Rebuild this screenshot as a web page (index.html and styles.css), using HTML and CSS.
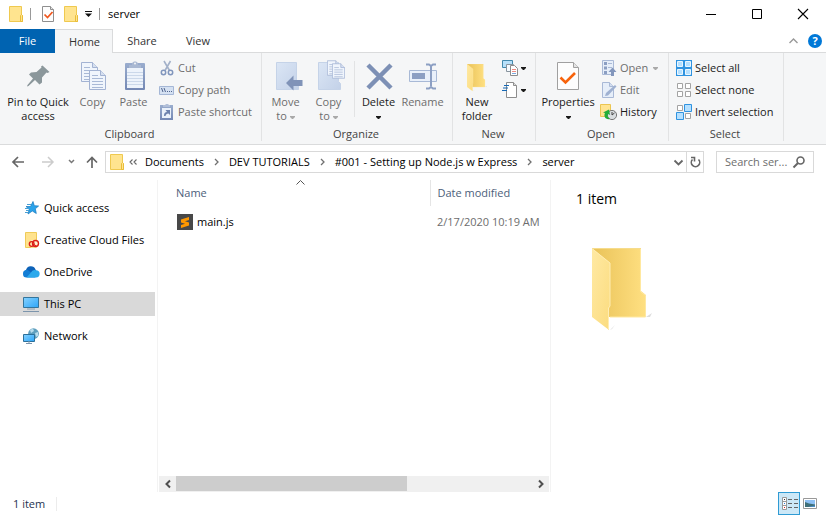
FILE: index.html
```html
<!DOCTYPE html>
<html lang="en">
<head>
<meta charset="utf-8">
<title>server</title>
<link rel="stylesheet" href="styles.css">
</head>
<body>
<svg class="defs" width="0" height="0" aria-hidden="true">
  <defs>
    <linearGradient id="blue" x1="0" y1="0" x2="1" y2="1"><stop offset="0" stop-color="#dbe6f5"/><stop offset="1" stop-color="#c3d1e8"/></linearGradient>
    <linearGradient id="clip" x1="0" y1="0" x2="0" y2="1"><stop offset="0" stop-color="#9aadce"/><stop offset="1" stop-color="#7488b4"/></linearGradient>
    <linearGradient id="back" x1="0" y1="0" x2="1" y2="0"><stop offset="0" stop-color="#e9c258"/><stop offset="1" stop-color="#ffe082"/></linearGradient>
    <linearGradient id="front" x1="0" y1="0" x2="1" y2="1"><stop offset="0" stop-color="#ffe9a3"/><stop offset="1" stop-color="#fbdc7f"/></linearGradient>
    <linearGradient id="screen" x1="0" y1="0" x2="1" y2="1"><stop offset="0" stop-color="#86d2ff"/><stop offset="1" stop-color="#2da5f8"/></linearGradient>
    <symbol id="folder" viewBox="0 0 14 16">
      <path d="M.5.5h12v8l1 1v6H.5z" fill="#ffe48f" stroke="#efc94f"/>
      <path d="M11.5 15V9.500l1-1 1 1v6h-2z" fill="#ffe48f" stroke="#e9bd38"/>
    </symbol>
    <symbol id="checkdoc" viewBox="0 0 22 28">
      <path d="M.5.500h16l5 5v22H.5z" fill="#fdfdfd" stroke="#a0a0a0"/>
      <path d="M16.500.500v5h5" fill="#e4e4e4" stroke="#a0a0a0"/>
      <path d="M3.500 15.500l5 5L18 11" fill="none" stroke="#f7630c" stroke-width="2.600"/>
    </symbol>
    <symbol id="checkdoc-small" viewBox="0 0 12 16">
      <path d="M.5.500h8l3 3v12H.5z" fill="#fdfdfd" stroke="#8f8f8f"/>
      <path d="M8.500.500v3h3" fill="#e4e4e4" stroke="#8f8f8f"/>
      <path d="M2.500 8.500l3 3 5-5.500" fill="none" stroke="#f0561d" stroke-width="1.700"/>
    </symbol>
    <symbol id="page" viewBox="0 0 17 20">
      <path d="M.5.500h11l5 5v14H.5z" fill="#f0f5fc" stroke="#a3b3d3"/>
      <path d="M11.500.500v5h5" fill="#d6e0f0" stroke="#a3b3d3"/>
      <path d="M3 5.500h6M3 8.500h11M3 11.500h11M3 14.500h11M3 17.500h11" stroke="#a9b9d6" fill="none"/>
    </symbol>
    <symbol id="bigfolder" viewBox="0 0 60 84">
      <path d="M54 69l6-4-2 4zM18 82l5-5-3 4z" fill="#ddd"/>
      <path d="M0 0h49v43l5 4v22H0z" fill="url(#back)"/>
      <path d="M48.500 1v42.500l5 4V69H18" fill="none" stroke="#ffe8a0"/>
      <path d="M0 0l18 15v43l-1 2v22L0 69z" fill="url(#front)"/>
      <path d="M0 .500h49" stroke="#f6dc8c"/>
      <path d="M.5 1l17.500 14v43l-1.500 2v21" fill="none" stroke="#ffedb3"/>
    </symbol>
    <symbol id="down" viewBox="0 0 5 3"><path d="M0 0h5v1L3 3H2L0 1z" fill="currentColor"/></symbol>
    <symbol id="chev" viewBox="0 0 5 8"><path d="M1 1l3 3-3 3" fill="none" stroke="#707070" stroke-width="1.300"/></symbol>
  </defs>
</svg>

<header class="titlebar">
  <div class="quick">
    <svg class="ico14"><use href="#folder"/></svg>
    <span class="bar"></span>
    <button class="plain props" aria-label="Properties"><svg width="12" height="16"><use href="#checkdoc-small"/></svg></button>
    <button class="plain make" aria-label="New folder"><svg class="ico14"><use href="#folder"/></svg></button>
    <button class="plain" aria-label="Customize toolbar"><svg width="7" height="6" viewBox="0 0 7 6"><path d="M0 .500h7" stroke="#111"/><path d="M0 2.500h7L3.500 6z" fill="#111"/></svg></button>
    <span class="bar"></span>
  </div>
  <h1 class="title">server</h1>
  <div class="window-buttons">
    <button class="plain" aria-label="Minimize"><svg width="10" height="10"><path d="M0 5.500h10" stroke="#000"/></svg></button>
    <button class="plain" aria-label="Maximize"><svg width="10" height="10"><path d="M.5.500h9v9h-9z" stroke="#000" fill="none"/></svg></button>
    <button class="plain" aria-label="Close"><svg width="10" height="10"><path d="M0 0l10 10M10 0L0 10" stroke="#000" stroke-width="1.100"/></svg></button>
  </div>
</header>

<nav class="tabs" aria-label="Ribbon tabs">
  <button class="tab file">File</button>
  <button class="tab active">Home</button>
  <button class="tab share">Share</button>
  <button class="tab view">View</button>
  <div class="tab-tools">
    <button class="plain" aria-label="Collapse ribbon"><svg width="9" height="6"><path d="M.5 5l4-4 4 4" fill="none" stroke="#999" stroke-width="1.400"/></svg></button>
    <button class="help" aria-label="Help">?</button>
  </div>
</nav>

<section class="ribbon">
  <div class="group clipboard">
    <div class="tools">
      <button class="big pin"><svg class="ico32" viewBox="0 0 32 32"><path d="M20.500 5.500l7 6.500-2 1-1-.500-4.500 5 0 5-2.500 2-4.500-4.500-6.500 6-1.500.500.500-1.500 5.500-6.500-4-4 2-2 5.500-.500 5-4.500-.500-1z" fill="#8b979b"/></svg><span>Pin to Quick access</span></button>
      <button class="big copy" disabled><svg class="ico32" viewBox="0 0 32 32"><use href="#page" x="4" y="2" width="17" height="20"/><use href="#page" x="12" y="10" width="17" height="20"/></svg><span>Copy</span></button>
      <button class="big paste" disabled><svg class="ico32" viewBox="0 0 32 32"><rect x="7" y="3" width="20" height="27" rx="1" fill="url(#clip)"/><path d="M9 8h16v20H9z" fill="#edf3fb"/><path d="M9 12.500h16M9 15.500h16M9 18.500h16M9 21.500h16M9 24.500h16" stroke="#cbd8ea"/><path d="M11 8V5h3V3l2-1.500h2L20 3v2h3v3z" fill="#a9b8d2"/><circle cx="17" cy="3.500" r="1" fill="#f5f6f7"/></svg><span>Paste</span></button>
      <div class="stack">
        <button class="small" disabled><svg class="ico16" viewBox="0 0 16 16"><path d="M5 1l5.500 9.500M11.500 1L6 10.500" stroke="#a3b1c9" stroke-width="1.600" fill="none"/><circle cx="4.500" cy="12.500" r="2.200" fill="none" stroke="#8196bd" stroke-width="1.500"/><circle cx="11.500" cy="12.500" r="2.200" fill="none" stroke="#8196bd" stroke-width="1.500"/></svg>Cut</button>
        <button class="small" disabled><svg class="ico16" viewBox="0 0 16 16"><path d="M.5 4.500h14v8H.5z" fill="#d5e1f2" stroke="#a5b7d6"/><path d="M2.500 6l1.500 4M5 6l1.500 4" stroke="#51658e" fill="none"/><path d="M8 9h1v1H8zM10 9h1v1h-1zM12 9h1v1h-1z" fill="#51658e"/></svg>Copy path</button>
        <button class="small" disabled><svg class="ico16" viewBox="0 0 16 16"><rect x="1" y="1" width="13" height="15" fill="url(#clip)"/><path d="M3 4h9v10H3z" fill="#eaf1fa"/><path d="M4 3V1h2l1-1h2l1 1h1v2z" fill="#b1bfd8"/><path d="M5 12c0-3 1-4 3-4L6.500 6H11v5L9.500 9.500C7.500 9.500 7 10.500 6.500 12z" fill="#6d82ad"/></svg>Paste shortcut</button>
      </div>
    </div>
    <div class="caption">Clipboard</div>
  </div>
  <div class="group organize">
    <div class="tools">
      <button class="big move" disabled><svg class="ico32" viewBox="0 0 32 32"><path d="M6.500 2.500h20v19l2 2v6h-22z" fill="url(#blue)" stroke="#c5d3e8"/><path d="M16 23l7.500-7.500V20h9v6h-9v4.500z" fill="#8093b8"/></svg><span>Move<br>to <svg class="drop"><use href="#down"/></svg></span></button>
      <button class="big copyto" disabled><svg class="ico32" viewBox="0 0 32 32"><path d="M5.500 2.500h20v19l2 2v6h-22z" fill="url(#blue)" stroke="#c5d3e8"/><use href="#page" x="14" y="0" width="13" height="16"/><use href="#page" x="19" y="3" width="13" height="16"/></svg><span>Copy<br>to <svg class="drop"><use href="#down"/></svg></span></button>
      <span class="divider"></span>
      <button class="big delete"><svg class="ico32" viewBox="0 0 32 32"><path d="M5 5l23 23M28 5L5 28" stroke="#7d90b5" stroke-width="4.500"/></svg><span>Delete<br><svg class="drop"><use href="#down"/></svg></span></button>
      <button class="big rename" disabled><svg class="ico32" viewBox="0 0 32 32"><path d="M2.500 10.500h27v11h-27z" fill="#e9f0fa" stroke="#a8b9d6"/><path d="M5 13h13v6H5z" fill="#8c9fc3"/><path d="M19 4.500h3l2 1.500 2-1.500h3M24 6v20M19 28.500h3l2-1.500 2 1.500h3" stroke="#8c9fc3" stroke-width="2" fill="none"/></svg><span>Rename</span></button>
    </div>
    <div class="caption">Organize</div>
  </div>
  <div class="group new">
    <div class="tools">
      <button class="big folder"><svg class="ico32" viewBox="0 0 32 32"><use href="#bigfolder" x="5" y="4" width="22" height="28"/></svg><span>New folder</span></button>
      <div class="stack">
        <button class="small" aria-label="New item"><svg class="ico16" viewBox="0 0 16 16"><path d="M.5.500h10v7H.5z" fill="#b7e0fa" stroke="#4389ad"/><path d="M4.500 4.500h7v7h-7z" fill="#f5faff" stroke="#88949e"/><path d="M8.500 5.500h4l3 3v7h-7z" fill="#fff" stroke="#8d8d8d"/><path d="M10 9.500h4M10 11.500h4" stroke="#ef8b83"/><path d="M10 13.500h4" stroke="#7ba9df"/></svg><svg class="drop"><use href="#down"/></svg></button>
        <button class="small" aria-label="Easy access"><svg class="ico16" viewBox="0 0 16 16"><path d="M4.500.500h7l3 3v12h-10z" fill="#fff" stroke="#8d8d8d"/><path d="M11.500.500v3h3" fill="#ddd" stroke="#8d8d8d"/><path d="M2 3.500h5M1 6h5M0 8.500h5" stroke="#1769b5" stroke-width="1.200"/></svg><svg class="drop"><use href="#down"/></svg></button>
      </div>
    </div>
    <div class="caption">New</div>
  </div>
  <div class="group open">
    <div class="tools">
      <button class="big properties"><svg class="ico32" viewBox="0 0 32 32"><use href="#checkdoc" x="5" y="2" width="22" height="28"/></svg><span>Properties<br><svg class="drop"><use href="#down"/></svg></span></button>
      <div class="stack">
        <button class="small" disabled><svg class="ico16" viewBox="0 0 16 16"><path d="M1.500.500h11v14h-11z" fill="#e6eef9" stroke="#a9b9d6"/><path d="M3 2h3v3H3zM3 6.500h3v3H3zM3 11h3v3H3z" fill="#8b9ec2"/><path d="M7 3.500h4M7 7.500h4" stroke="#a9b9d6"/><path d="M10 16v-4H7.500l4-4.500 4 4.500H13v4z" fill="#8296bc"/></svg>Open <svg class="drop"><use href="#down"/></svg></button>
        <button class="small" disabled><svg class="ico16" viewBox="0 0 16 16"><path d="M1.500.500h7l4 4v11h-11z" fill="#e6eef9" stroke="#a9b9d6"/><path d="M8.500.500v4h4" fill="#d3deef" stroke="#a9b9d6"/><path d="M4 14l1-3 9-8 1.500 1.500-8.500 9z" fill="#9fb1d1"/></svg>Edit</button>
        <button class="small"><svg class="ico16" viewBox="0 0 16 16"><path d="M-.5.500h10v12h-10z" fill="#ffe491" stroke="#ebc551"/><circle cx="11" cy="11" r="4.600" fill="#d9dde0" stroke="#777"/><path d="M11 8v3l2.500-2" stroke="#444" fill="none"/><path d="M9 15C4 16 2.500 12 4 9L2 8.500 8 5.500 9 11 7 10c-1 2 0 4 2 5z" fill="#22ad38"/></svg>History</button>
      </div>
    </div>
    <div class="caption">Open</div>
  </div>
  <div class="group select">
    <div class="tools">
      <div class="stack">
        <button class="small"><svg class="ico16" viewBox="0 0 16 16"><path d="M0 0h16v16H0z" fill="#2f93e0"/><path d="M1.500 1.500h5v5h-5zM9.500 1.500h5v5h-5zM1.500 9.500h5v5h-5zM9.500 9.500h5v5h-5z" fill="#b5e0ff" stroke="#e9f6ff"/></svg>Select all</button>
        <button class="small"><svg class="ico16" viewBox="0 0 16 16"><path d="M1.500 1.500h5v5h-5zM9.500 1.500h5v5h-5zM1.500 9.500h5v5h-5zM9.500 9.500h5v5h-5z" fill="#fff" stroke="#a3a3a3"/></svg>Select none</button>
        <button class="small"><svg class="ico16" viewBox="0 0 16 16"><path d="M1.500 1.500h5v5h-5zM9.500 9.500h5v5h-5z" fill="#fff" stroke="#a3a3a3"/><path d="M8.500.500h7v7h-7zM.5 8.500h7v7h-7z" fill="#b5e0ff" stroke="#2f93e0"/></svg>Invert selection</button>
      </div>
    </div>
    <div class="caption">Select</div>
  </div>
</section>

<section class="navrow">
  <div class="history">
    <button class="plain" aria-label="Back"><svg width="12" height="12"><path d="M12 6H1.500M6 1L1 6l5 5" fill="none" stroke="#666" stroke-width="1.700"/></svg></button>
    <button class="plain forward" aria-label="Forward"><svg width="12" height="12"><path d="M0 6h10.500M6 1l5 5-5 5" fill="none" stroke="#ccc" stroke-width="1.500"/></svg></button>
    <button class="plain recent" aria-label="Recent locations"><svg width="7" height="12"><path d="M1 4l2.500 2.500L6 4" fill="none" stroke="#777" stroke-width="1.500"/></svg></button>
    <button class="plain" aria-label="Up"><svg width="12" height="12"><path d="M6 12V1.500M1 6.500l5-5 5 5" fill="none" stroke="#666" stroke-width="1.700"/></svg></button>
  </div>
  <div class="address">
    <svg class="ico14"><use href="#folder"/></svg>
    <svg class="more" width="8" height="8"><path d="M3.500 1.500L1 4l2.500 2.500M7.500 1.500L5 4l2.500 2.500" fill="none" stroke="#666" stroke-width="1.100"/></svg>
    <ol class="crumbs">
      <li><a href="#">Documents</a><svg class="sep"><use href="#chev"/></svg></li>
      <li><a href="#">DEV TUTORIALS</a><svg class="sep"><use href="#chev"/></svg></li>
      <li><a href="#">#001 - Setting up Node.js w Express</a><svg class="sep"><use href="#chev"/></svg></li>
      <li><a href="#">server</a></li>
    </ol>
    <button class="plain prev" aria-label="Previous locations"><svg width="9" height="7"><path d="M.5 1.500l4 4 4-4" fill="none" stroke="#666" stroke-width="1.800"/></svg></button>
    <button class="plain refresh" aria-label="Refresh"><svg width="11" height="12"><path d="M2.500 3.500A4.200 4.200 0 1 0 8.500 3.500M1 1.500h3.500V5.500" fill="none" stroke="#666" stroke-width="1.600"/></svg></button>
  </div>
  <label class="search">
    <input type="text" placeholder="Search ser..." aria-label="Search server">
    <svg width="12" height="12"><circle cx="7.500" cy="4.500" r="3.500" fill="none" stroke="#666" stroke-width="1.600"/><path d="M5 7L.5 11.500" stroke="#666" stroke-width="2"/></svg>
  </label>
</section>

<main class="content">
  <nav class="sidebar" aria-label="Locations">
    <a href="#"><svg class="ico16" viewBox="0 0 16 16"><path d="M10 1.500l1.300 4.200 4.300.300-3.300 2.800 1 4.700-4-2.500L5 14l1.200-4.700L3 6.500h4.500z" fill="#2ba3ea" stroke="#1677bd" stroke-width=".7"/><path d="M4 4.500h4M2 8.500h4M3 10.500h3M2 12.500h3" stroke="#4a9fd4"/></svg>Quick access</a>
    <a href="#"><svg class="ico16" viewBox="0 0 16 16"><path d="M2.500.500h11v15h-11z" fill="#ffe38e" stroke="#efcb58"/><path d="M8.500 8h5a3 3 0 0 1 2.500 3v3l-2 1.500H8z" fill="#fff3d0"/><circle cx="8.700" cy="12" r="2.400" fill="none" stroke="#dc1f17" stroke-width="1.300"/><circle cx="12.500" cy="11.500" r="3" fill="none" stroke="#dc1f17" stroke-width="1.400"/><path d="M9 11.500l4.500 2.500" stroke="#dc1f17"/></svg>Creative Cloud Files</a>
    <a href="#"><svg class="ico16" viewBox="0 0 16 16"><path d="M3 6a5 5 0 0 1 9.500-.500L14 8 7 12z" fill="#0d62b8"/><path d="M0 10a3.500 3.500 0 0 1 6-3l8 5-2 1.500H3.500A3.500 3.500 0 0 1 0 10z" fill="#127dd5"/><path d="M8 8.500a4 4 0 0 1 5-2.300 3.600 3.600 0 0 1 0 7.300H3.500z" fill="#2ba9ec"/></svg>OneDrive</a>
    <a href="#" class="current" aria-current="page"><svg class="ico16" viewBox="0 0 16 16"><path d="M.5 1.500h15v10H.5z" fill="url(#screen)" stroke="#34759c"/><path d="M4 13h8" stroke="#8aa0b2"/><path d="M0 15.500h16" stroke="#7d95ac"/></svg>This PC</a>
    <a href="#"><svg class="ico16" viewBox="0 0 16 16"><circle cx="10.500" cy="5.700" r="5.400" fill="#5f9fbe"/><path d="M7 2l3-1.500L11 3 8 5zM12 5l3-1v4l-2 1z" fill="#b9dcec"/><path d="M.5 6.500h11v7H.5z" fill="url(#screen)" stroke="#2c6f99"/><path d="M6 13v2M3 15.500h6" stroke="#7d95ac"/></svg>Network</a>
  </nav>

  <section class="files">
    <svg class="sorted" width="9" height="5"><path d="M.5 4.500l4-4 4 4" fill="none" stroke="#555"/></svg>
    <table>
      <thead><tr><th class="name">Name</th><th class="date">Date modified</th></tr></thead>
      <tbody><tr><td class="name"><span class="file-name"><svg class="ico16" viewBox="0 0 16 16"><path d="M0 0h16v16H0z" fill="#484848"/><path d="M12 3v3L8 7.200l4 1.300v3L4 14v-3l4-1.300-4-1.200V5.500z" fill="#ff9800"/></svg>main.js</span></td><td class="date">2/17/2020 10:19 AM</td></tr></tbody>
    </table>
    <div class="scrollbar">
      <button class="plain" aria-label="Scroll left"><svg width="6" height="8"><path d="M5 .500L1.500 4 5 7.500" fill="none" stroke="#505050" stroke-width="2"/></svg></button>
      <div class="track"><div class="thumb"></div></div>
      <button class="plain" aria-label="Scroll right"><svg width="6" height="8"><path d="M1 .500L4.500 4 1 7.500" fill="none" stroke="#505050" stroke-width="2"/></svg></button>
    </div>
  </section>

  <aside class="details">
    <h2>1 item</h2>
    <svg width="60" height="84"><use href="#bigfolder"/></svg>
  </aside>
</main>

<footer class="status">
  <span class="count">1 item</span>
  <div class="views">
    <button class="on" aria-label="Details view"><svg width="16" height="13"><path d="M.5.500h4v12h-4zM.5 4.500h4M.5 8.500h4" fill="#fff" stroke="#999"/><path d="M6 2.500h4M12 2.500h4M6 6.500h4M12 6.500h4M6 10.500h4M12 10.500h4" stroke="#666"/><path d="M2 2h1v1H2z" fill="#333"/><path d="M2 6h1v1H2z" fill="#2d7fe0"/><path d="M2 10h1v1H2z" fill="#d22"/></svg></button>
    <button aria-label="Large icons view"><svg width="14" height="11"><path d="M.5.500h13v10H.5z" fill="#fff" stroke="#999"/><path d="M2 2h10v7H2z" fill="#8dc0f5"/><path d="M2 4l4 1.500 6 1V9H2z" fill="#3f6f78"/><path d="M5 9l7-1.500V9z" fill="#4d8fcc"/></svg></button>
  </div>
</footer>
</body>
</html>
```
FILE: styles.css
```css
* { box-sizing: border-box; }

body {
  margin: 0;
  min-height: 100vh;
  display: flex;
  flex-direction: column;
  background: #fff;
  color: #000;
  font: 11px/14px "Open Sans", "Noto Sans", sans-serif;
}

.defs { position: absolute; }
svg { display: block; flex: none; overflow: visible; }
button, input { font: inherit; color: inherit; border: 0; background: none; padding: 0; margin: 0; }
a { color: inherit; text-decoration: none; }
h1, h2 { margin: 0; font-weight: 400; }

.ico14 { width: 14px; height: 16px; }
.ico16 { width: 16px; height: 16px; }
.ico32 { width: 32px; height: 32px; }
.drop { display: inline-block; width: 5px; height: 3px; vertical-align: middle; }
.plain { display: flex; align-items: center; justify-content: center; }

/* Title bar */
.titlebar { display: flex; align-items: center; height: 29px; padding-bottom: 2px; }
.quick { display: flex; align-items: center; gap: 7px; padding-left: 9px; }
.quick .bar { width: 1px; height: 12px; background: #999; }
.quick .props { margin-left: 4px; }
.quick .make { margin-left: 3px; }
.title { font-size: 11px; margin-left: 8px; }
.window-buttons { display: flex; margin-left: auto; }
.window-buttons .plain { width: 46px; height: 27px; }

/* Ribbon tabs */
.tabs { display: flex; height: 24px; border-bottom: 1px solid #dadbdc; color: #333; }
.tab { height: 24px; }
.tab.file { width: 55px; background: #0063b1; color: #fff; }
.tab.active { width: 58px; background: #f5f6f7; border: 1px solid #dadbdc; border-width: 1px 1px 0 0; padding-left: 2px; }
.tab.share { width: 58px; }
.tab.view { width: 54px; }
.tab-tools { display: flex; align-items: center; gap: 10px; margin-left: auto; padding-right: 4px; }
.help { width: 14px; height: 14px; border-radius: 50%; background: #0078d7; color: #fff; font-weight: 700; line-height: 14px; }

/* Ribbon */
.ribbon { display: flex; background: #f5f6f7; border-bottom: 1px solid #dadbdc; padding-bottom: 3px; }
.group { border-right: 1px solid #e2e3e4; color: #1a1a1a; }
.clipboard { width: 262px; }
.organize { width: 191px; }
.new { width: 83px; }
.open { width: 133px; }
.select { width: 115px; }
.tools { display: flex; height: 74px; padding-left: 2px; }
.caption { text-align: center; color: #444; padding-right: 2px; }
.big { display: flex; flex-direction: column; align-items: center; gap: 3px; padding-top: 7px; height: 72px; }
button:disabled { color: #6d6d6d; }
button:disabled .drop { color: #a9a9a9; }
.pin { width: 72px; }
.copy { width: 37px; }
.paste { width: 45px; }
.move, .copyto, .delete { width: 43px; }
.folder { width: 44px; }
.rename { width: 45px; }
.properties { width: 60px; }
.divider { width: 1px; height: 56px; background: #e2e3e4; margin: 8px 2px 0 4px; }
.stack { display: flex; flex-direction: column; align-items: flex-start; padding: 4px 0 0 3px; }
.small { display: flex; align-items: center; gap: 3px; height: 22px; white-space: nowrap; }
.open .small .drop { margin-left: 2px; }
.select .stack { padding-left: 5px; }

/* Navigation row */
.navrow { display: flex; align-items: center; height: 34px; padding-right: 12px; }
.history { display: flex; align-items: center; gap: 11px; width: 105px; padding-left: 12px; }
.forward { margin-left: 7px; }
.recent { margin-left: 3px; }
.address { display: flex; align-items: center; flex: 1; height: 22px; border: 1px solid #d9d9d9; padding-left: 4px; margin-right: 12px; }
.more { margin: 0 8px 0 5px; }
.crumbs { display: flex; list-style: none; margin: 0; padding: 0; white-space: nowrap; }
.crumbs li { display: flex; align-items: center; }
.sep { width: 5px; height: 8px; margin: 0 10px; }
.prev { margin-left: auto; width: 16px; height: 20px; }
.refresh { width: 17px; height: 20px; border-left: 1px solid #d9d9d9; }
.search { display: flex; align-items: center; width: 98px; height: 22px; border: 1px solid #d9d9d9; padding: 0 8px; }
.search input { flex: 1; min-width: 0; outline: 0; }
.search input::placeholder { color: #6d6d6d; opacity: 1; }

/* Panes */
.content { display: grid; grid-template-columns: 158px 1fr 276px; flex: 1; padding-top: 1px; }
.sidebar { display: flex; flex-direction: column; gap: 8px; padding: 16px 2px 0 0; border-right: 1px solid #f3f3f3; }
.sidebar a { display: flex; align-items: center; gap: 5px; height: 24px; padding-left: 23px; white-space: nowrap; }
.sidebar .current { background: #d9d9d9; }

.files { position: relative; display: flex; flex-direction: column; padding: 0 1px 0 1px; }
.sorted { position: absolute; left: 138px; top: 0; }
.files table { width: 100%; border-collapse: collapse; table-layout: fixed; text-align: left; }
.files th { height: 26px; font-weight: 400; color: #4c607a; padding: 0; }
.files td { height: 32px; padding: 0; }
.files .name { padding-left: 17px; }
.files .date { width: 119px; padding-left: 7px; white-space: nowrap; }
.files th.date { border-left: 1px solid #e5e5e5; }
.files td.date { color: #6d6d6d; }
.file-name { display: flex; align-items: center; gap: 4px; padding-left: 1px; }
.scrollbar { display: flex; height: 16px; margin-top: auto; background: #f0f0f0; }
.scrollbar .plain { width: 17px; height: 16px; }
.track { flex: 1; }
.thumb { width: 65%; height: 15px; background: #cdcdcd; }

.details { border-left: 1px solid #f3f3f3; padding: 9px 0 0 25px; }
.details h2 { font-size: 14px; line-height: 20px; margin-bottom: 39px; }
.details svg { margin-left: 16px; }

/* Status bar */
.status { display: flex; align-items: center; justify-content: space-between; height: 23px; padding-right: 6px; color: #26324f; }
.count { padding: 0 11px 0 13px; border-right: 1px solid #ececec; }
.views { display: flex; }
.views button { display: flex; align-items: center; justify-content: center; width: 20px; height: 23px; }
.views .on { width: 22px; padding-left: 2px; background: #cce8f7; border: 1px solid #2f9bd4; }
```
